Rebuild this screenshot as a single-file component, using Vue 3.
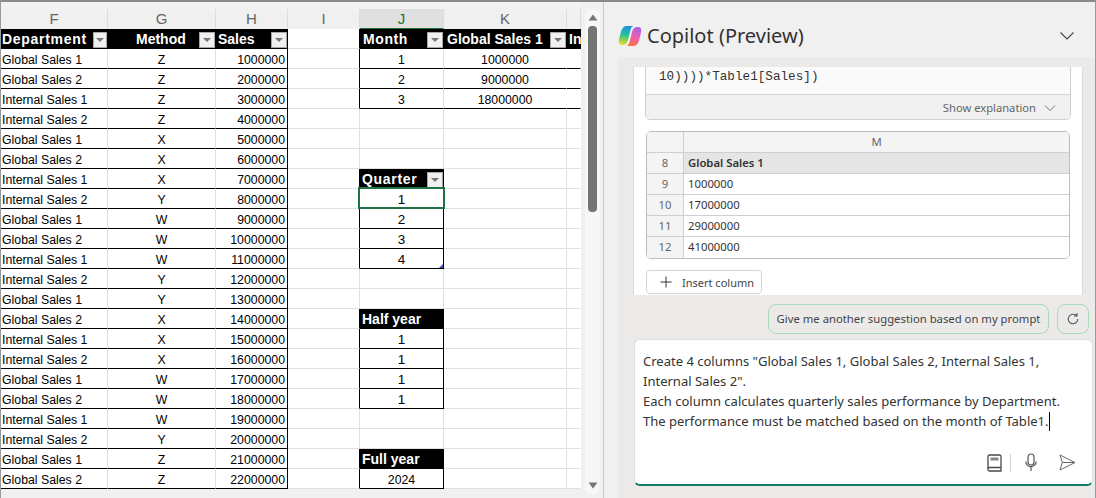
<script setup>
const dept = ['Global Sales 1', 'Global Sales 2', 'Internal Sales 1', 'Internal Sales 2']
const methods = 'ZZZZXXXYWWWYYXXXWWWYZZ'.split('')
const depts = [0,1,2,3,0,1,2,3,0,1,2,3,0,1,2,3,0,1,2,3,0,1]
const side = {
  1: { j: '1', k: '1000000', t: 1 }, 2: { j: '2', k: '9000000', t: 1 }, 3: { j: '3', k: '18000000', t: 1 },
  7: { h: 'Quarter', f: 1, w: 1 },
  8: { j: '1', s: 1, b: 1, big: 1 }, 9: { j: '2', s: 1, big: 1 }, 10: { j: '3', s: 1, big: 1 }, 11: { j: '4', s: 1, handle: 1, big: 1 },
  14: { h: 'Half year' },
  15: { j: '1', s: 1, big: 1 }, 16: { j: '1', s: 1, big: 1 }, 17: { j: '1', s: 1, big: 1 }, 18: { j: '1', s: 1, big: 1 },
  21: { h: 'Full year' },
  22: { j: '2024', s: 1 }
}
const rows = methods.map((m, i) => ({
  n: i + 1,
  dept: dept[depts[i]],
  method: m,
  sales: String((i + 1) * 1000000),
  side: side[i + 1] || {}
}))
const colHeads = ['F', 'G', 'H', 'I', 'J', 'K', '']
const preview = [
  ['8', 'Global Sales 1', true],
  ['9', '1000000'],
  ['10', '17000000'],
  ['11', '29000000'],
  ['12', '41000000']
]
</script>

<template>
  <div class="app">
    <section class="sheet">
      <div class="sheet-main">
        <div class="grid">
          <div class="heads">
            <div v-for="(c, i) in colHeads" :key="i" class="head" :class="{ active: c === 'J' }">{{ c }}</div>
          </div>

          <div class="row">
            <div class="c th f-col"><span class="wide">Department</span><i class="fb narrow"></i></div>
            <div class="c th"><span class="mid">Method</span><i class="fb"></i></div>
            <div class="c th"><span>Sales</span><i class="fb"></i></div>
            <div class="c blackr"></div>
            <div class="c th"><span class="wide m">Month</span><i class="fb"></i></div>
            <div class="c th k-th"><span>Global Sales 1</span><i class="fb"></i></div>
            <div class="c th clip"><span>In</span></div>
          </div>

          <div v-for="r in rows" :key="r.n" class="row">
            <div class="c d left f-col">{{ r.dept }}</div>
            <div class="c d center">{{ r.method }}</div>
            <div class="c d right blackr">{{ r.sales }}</div>
            <div class="c" :class="{ blackr: r.side.t || r.side.s || r.side.h }"></div>
            <template v-if="r.side.h">
              <div class="c th"><span :class="{ wide: r.side.w }">{{ r.side.h }}</span><i v-if="r.side.f" class="fb"></i></div>
            </template>
            <div v-else class="c" :class="{ d: r.side.j, center: r.side.j, big: r.side.big, sel: r.side.b, handle: r.side.handle, blackr: r.side.s }">{{ r.side.j }}</div>
            <div class="c" :class="{ d: r.side.t, center: r.side.t, 'no-r': r.side.t }">{{ r.side.k }}</div>
            <div class="c no-r" :class="{ d: r.side.t }"></div>
          </div>
        </div>
        <div class="sheet-foot"></div>
      </div>
      <div class="vscroll">
        <div class="track">
          <svg class="arrow" width="10" height="7" viewBox="0 0 10 7"><path d="M5 0.5L9.5 6.5H0.5Z" fill="#777" /></svg>
          <div class="thumb"></div>
          <div class="spacer"></div>
          <svg class="arrow" width="10" height="7" viewBox="0 0 10 7"><path d="M0.5 0.5H9.5L5 6.5Z" fill="#777" /></svg>
        </div>
      </div>
    </section>

    <aside class="pane">
      <header class="pane-head">
        <svg class="logo" width="24" height="24" viewBox="0 0 24 23">
          <defs>
            <linearGradient id="lg1" x1="0.45" y1="0" x2="0.35" y2="1">
              <stop offset="0" stop-color="#1b8fe6" />
              <stop offset="0.45" stop-color="#25c2a0" />
              <stop offset="0.75" stop-color="#8ed04c" />
              <stop offset="1" stop-color="#f5d63a" />
            </linearGradient>
            <linearGradient id="lg2" x1="0.7" y1="0" x2="0.35" y2="1">
              <stop offset="0" stop-color="#a960e8" />
              <stop offset="0.5" stop-color="#ec5fb0" />
              <stop offset="1" stop-color="#f9753a" />
            </linearGradient>
          </defs>
          <path d="M9 1.500H16C14 1.500 13 3.500 12.500 5.500L10 15.500C9.300 18.500 7.500 20.500 5 20.500H4C1.800 20.500 .5 19 .8 17C1 14.500 1.800 11 3 7C4 3.500 6 1.500 9 1.500Z" fill="url(#lg1)" />
          <path d="M15 21.500H8C10 21.500 11 19.500 11.500 17.500L14 7.500C14.700 4.500 16.500 2.500 19 2.500H20C22.200 2.500 23.500 4 23.200 6C23 8.500 22.200 12 21 16C20 19.500 18 21.500 15 21.500Z" fill="url(#lg2)" />
        </svg>
        <h1 class="title">Copilot (Preview)</h1>
        <svg class="chev" width="16" height="10" viewBox="0 0 16 10"><path d="M1.500 1.500L8 8l6.500-6.500" fill="none" stroke="#444" stroke-width="1.100" /></svg>
      </header>

      <div class="body">
        <div class="card-wrap">
          <div class="card">
            <div class="code-box">
              <div class="code">10))))*Table1[Sales])</div>
              <div class="code-foot">
                <span>Show explanation</span>
                <svg width="12" height="8" viewBox="0 0 12 8"><path d="M1 1.500L6 6.500l5-5" fill="none" stroke="#777" stroke-width="1" /></svg>
              </div>
            </div>

            <div class="pv">
              <div class="pv-row pv-head">
                <div class="pv-n"></div>
                <div class="pv-v">M</div>
              </div>
              <div v-for="p in preview" :key="p[0]" class="pv-row" :class="{ hl: p[2] }">
                <div class="pv-n">{{ p[0] }}</div>
                <div class="pv-v">{{ p[1] }}</div>
              </div>
            </div>

            <button class="insert">
              <svg width="14" height="14" viewBox="0 0 14 14"><path d="M7 1.500v11M1.500 7h11" stroke="#333" stroke-width="1" fill="none" /></svg>
              <span>Insert column</span>
            </button>
          </div>
        </div>

        <div class="suggest">
          <div class="pill">Give me another suggestion based on my prompt</div>
          <div class="refresh">
            <svg width="14" height="14" viewBox="0 0 14 14"><path d="M11.800 7a4.800 4.800 0 1 1-1.500-3.500M11 1v3h-3" fill="none" stroke="#555" stroke-width="1.100" /></svg>
          </div>
        </div>

        <div class="input">
          <div class="prompt">
            <div>Create 4 columns "Global Sales 1, Global Sales 2, Internal Sales 1,</div>
            <div>Internal Sales 2".</div>
            <div>Each column calculates quarterly sales performance by Department.</div>
            <div>The performance must be matched based on the month of Table1.<span class="caret"></span></div>
          </div>
          <div class="tools">
            <svg class="book" width="15" height="18" viewBox="0 0 15 18"><path d="M2.500 1h10a1.500 1.500 0 0 1 1.500 1.500V17H2.500A1.500 1.500 0 0 1 1 15.500V2.500A1.500 1.500 0 0 1 2.500 1Z" fill="none" stroke="#4a4a4a" stroke-width="1.300" /><path d="M1 14.500A1.500 1.500 0 0 1 2.500 13.500H14" fill="none" stroke="#4a4a4a" stroke-width="1.300" /><rect x="3.500" y="3.500" width="8" height="3" fill="#888" /></svg>
            <div class="sep"></div>
            <svg class="mic" width="12" height="19" viewBox="0 0 12 19"><rect x="3" y="1" width="6" height="11" rx="3" fill="none" stroke="#555" stroke-width="1.200" /><path d="M.8 8.500a5.200 5.200 0 0 0 10.400 0M6 14v4" fill="none" stroke="#555" stroke-width="1.200" /></svg>
            <svg class="send" width="17" height="17" viewBox="0 0 17 17"><path d="M1 1L16 8.500 1 16 3.300 8.500ZM3.300 8.500H16" fill="none" stroke="#666" stroke-width="1" stroke-linejoin="round" /></svg>
          </div>
        </div>
      </div>
    </aside>
  </div>
</template>

<style>
html, body { margin: 0; padding: 0; overflow: hidden; background: #f0f0f0; }
</style>

<style scoped>
.app {
  width: 1096px;
  height: 498px;
  box-sizing: border-box;
  border-top: 2px solid #8a8a8a;
  border-left: 1px solid #9a9a9a;
  border-right: 1px solid #9a9a9a;
  display: flex;
  overflow: hidden;
  background: #f0f0f0;
  font-family: "Liberation Sans", Arial, sans-serif;
}
.sheet { width: 603px; display: flex; flex: none; box-sizing: border-box; border-right: 1px solid #c9c9c9; background: #f2f2f2; }
.sheet-main { width: 580px; flex: none; display: flex; flex-direction: column; overflow: hidden; }
.grid { width: 580px; }
.heads, .row { display: grid; grid-template-columns: 107px 108px 72px 72px 84px 123px 14px; }
.heads { height: 27px; padding-top: 7px; box-sizing: border-box; }
.head {
  box-sizing: border-box;
  border-right: 1px solid #dcdcdc;
  border-bottom: 1px solid #a8a8a8;
  background: #f0f0f0;
  color: #666;
  font-size: 15px;
  line-height: 19px;
  text-align: center;
}
.head.active { background: #e0e0e0; border-bottom: 2px solid #1d6f42; color: #1d6f42; }
.row { height: 20px; }
.c {
  box-sizing: border-box;
  height: 20px;
  border-right: 1px solid #e0e0e0;
  border-bottom: 1px solid #e0e0e0;
  background: #fff;
  overflow: hidden;
  white-space: nowrap;
  position: relative;
}
.th {
  background: #000;
  color: #fff;
  border-color: #000;
  font-weight: 700;
  font-size: 14px;
  line-height: 19px;
  padding-left: 2px;
  display: flex;
  align-items: center;
  justify-content: space-between;
}
.th span { padding-top: 1px; }
.f-col { padding-left: 1px; }
.k-th { padding-left: 3px; }
.th .mid { margin-left: 26px; }
.wide { letter-spacing: 0.7px; }
.wide.m { margin-left: 1px; letter-spacing: 0.6px; }
.fb {
  display: block;
  flex: none;
  box-sizing: border-box;
  width: 16px;
  height: 16px;
  margin-top: 2px;
  background: #f0f0f0;
  border: 1px solid #a8a8a8;
  position: relative;
}
.fb.narrow { width: 14px; }
.fb.narrow::after { left: 2px; }
.fb::after {
  content: "";
  position: absolute;
  left: 3px;
  top: 5px;
  border-left: 4px solid transparent;
  border-right: 4px solid transparent;
  border-top: 4px solid #777;
}
.d {
  color: #000;
  font-size: 12.3px;
  line-height: 22px;
  border-bottom-color: #000;
}
.blackr { border-right-color: #000; }
.no-r { border-right-color: #fff; }
.left { padding-left: 1px; }
.center { text-align: center; }
.right { text-align: right; padding-right: 2px; }
.big { font-size: 13.5px; }
.clip { overflow: hidden; border-right: 0; }
.sel { overflow: visible; z-index: 2; }
.sel::after {
  content: "";
  position: absolute;
  left: -2px;
  top: -2px;
  border: 2px solid #1f7246;
  width: 83px;
  height: 18px;
}
.handle::after {
  content: "";
  position: absolute;
  right: 0;
  bottom: 0;
  border-left: 4px solid transparent;
  border-bottom: 4px solid #3b4db5;
}
.sheet-foot { flex: 1; background: #f0f0f0; }
.vscroll { width: 22px; flex: none; background: #f0f0f0; padding: 7px 0 4px 4px; box-sizing: border-box; }
.track {
  width: 15px;
  height: 100%;
  box-sizing: border-box;
  background: #f7f7f7;
  border-radius: 7px;
  display: flex;
  flex-direction: column;
  align-items: center;
  padding: 5px 0 5px;
}
.arrow { flex: none; margin: 0; }
.thumb { width: 9px; height: 186px; margin-top: 5px; background: #757575; border-radius: 4px; flex: none; }
.spacer { flex: 1; }

.pane { flex: 1; min-width: 0; display: flex; flex-direction: column; background: #f0f0f0; font-family: "Noto Sans", "Open Sans", sans-serif; }
.pane-head { height: 55px; flex: none; display: flex; align-items: center; padding: 12px 20px 0 14px; box-sizing: border-box; }
.logo { flex: none; }
.title { margin: 0 0 0 5px; font-size: 20px; font-weight: 400; color: #333; flex: 1; }
.chev { flex: none; }
.body { flex: 1; min-height: 0; margin-left: 14px; background: #ebeae8; display: flex; flex-direction: column; }
.card-wrap { height: 238px; flex: none; padding: 10px 12px 0 15px; box-sizing: border-box; }
.card { height: 228px; background: #fff; border-left: 1px solid #dcdcdc; border-right: 1px solid #dcdcdc; padding: 0 11px; box-sizing: border-box; overflow: hidden; }
.code-box { box-sizing: border-box; height: 53px; border: 1px solid #cfcfcf; border-top: 0; border-radius: 0 0 5px 5px; background: #fafafa; overflow: hidden; }
.code { height: 27px; padding: 1px 0 0 13px; box-sizing: border-box; font-family: "Liberation Mono", monospace; font-size: 12.67px; line-height: 18px; color: #333; }
.code-foot { height: 25px; background: #f0f0f0; border-top: 1px solid #d4d4d4; display: flex; align-items: center; justify-content: flex-end; gap: 8px; padding-right: 14px; font-size: 11.2px; color: #666; }
.pv { margin: 11px 1px 0; border: 1px solid #bdbdbd; border-radius: 5px; overflow: hidden; }
.pv-row { display: grid; grid-template-columns: 37px 1fr; height: 21px; box-sizing: border-box; border-bottom: 1px solid #cfcfcf; font-size: 11.3px; line-height: 20px; color: #333; background: #fff; }
.pv-row:last-child { border-bottom: 0; height: 21px; }
.pv-n { background: #f4f4f4; border-right: 1px solid #cfcfcf; text-align: center; color: #666; }
.pv-v { padding-left: 4px; }
.pv-head .pv-v { background: #f4f4f4; padding: 0; text-align: center; color: #666; }
.hl .pv-v { background: #e5e5e5; font-weight: 600; }
.insert { margin: 11px 0 0 1px; width: 116px; height: 24px; display: flex; align-items: center; gap: 9px; padding: 0 0 0 12px; background: #fff; border: 1px solid #d4d4d4; border-radius: 4px; font-family: inherit; font-size: 11px; color: #444; white-space: nowrap; }
.suggest { height: 44px; flex: none; display: flex; align-items: flex-start; justify-content: flex-end; gap: 8px; padding: 9px 6px 0 0; box-sizing: border-box; }
.pill { height: 30px; width: 281px; box-sizing: border-box; border: 1px solid #a6dcbc; border-radius: 8px; text-align: center; font-size: 11.3px; line-height: 28px; color: #444; white-space: nowrap; }
.refresh { width: 32px; height: 30px; box-sizing: border-box; border: 1px solid #a6dcbc; border-radius: 8px; display: flex; align-items: center; justify-content: center; }
.input { height: 147px; flex: none; margin: 0 2px 0 16px; box-sizing: border-box; background: #fff; border: 1px solid #dedede; border-bottom: 2px solid #0f7b64; border-radius: 6px; padding: 11px 8px 0 8px; display: flex; flex-direction: column; justify-content: space-between; }
.prompt { font-size: 13.03px; line-height: 20px; color: #333; white-space: nowrap; }
.caret { display: inline-block; width: 1px; height: 19px; background: #000; vertical-align: -5px; }
.tools { display: flex; align-items: center; justify-content: flex-end; padding: 0 8px 12px 0; }
.sep { width: 1px; height: 18px; background: #d0d0d0; margin: 0 14px 0 8px; }
.mic { margin-right: 22px; }
.send { flex: none; }
</style>
